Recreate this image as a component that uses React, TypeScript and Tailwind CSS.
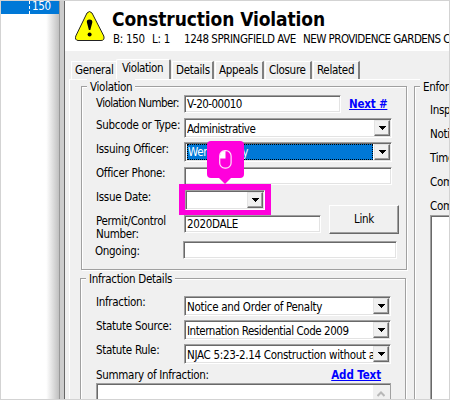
import type { ReactNode } from 'react';
import { clsx } from 'clsx';

const tabs = [
  { label: 'Details', className: 'ml-px w-[42px]' },
  { label: 'Appeals', className: 'ml-px w-[49px]' },
  { label: 'Closure', className: 'ml-px w-[47px]' },
  { label: 'Related', className: 'ml-px w-[47px]' },
];

const enforcement = ['Inspector:', 'Notice Date:', 'Time:', 'Comply By:', 'Comments:'];

function WarningIcon() {
  return (
    <svg width="30" height="32" viewBox="0 0 30 32" className="shrink-0">
      <path d="M12 3Q14.5 0 17 3L28.8 26Q30 30.5 26 30.5H3Q-.5 30 .8 26Z" fill="#ff0" stroke="#222" />
      <path d="M14.5 9.5c-2 0-3 1.3-2.6 3.1L13.9 20h1.4l2-7.4c.4-1.8-.8-3.1-2.8-3.1Z" fill="#000" />
      <circle cx="14.6" cy="24.5" r="2" fill="#000" />
    </svg>
  );
}

function GroupBox({ title, className, children }: { title: string; className: string; children: ReactNode }) {
  return (
    <div
      className={clsx(
        'relative border border-[#a0a0a0] shadow-[1px_1px_0_#fff,inset_1px_1px_0_#fff]',
        className
      )}
    >
      <span className="absolute -top-[8px] left-[5px] bg-[#f0f0f0] px-[3px] leading-4">{title}</span>
      {children}
    </div>
  );
}

function TextField({ value, className }: { value?: string; className: string }) {
  return (
    <div
      className={clsx(
        'h-[18px] shrink-0 border border-t-[#a0a0a0] border-l-[#a0a0a0] border-r-white border-b-white bg-white pl-[2px] leading-[17px] shadow-[inset_1px_1px_0_#696969,inset_-1px_-1px_0_#e3e3e3]',
        className
      )}
    >
      {value}
    </div>
  );
}

function Combo({ value, selected, className }: { value?: string; selected?: boolean; className: string }) {
  return (
    <div
      className={clsx(
        'flex h-5 shrink-0 border border-t-[#a0a0a0] border-l-[#a0a0a0] border-r-white border-b-white bg-white p-px shadow-[inset_1px_1px_0_#696969,inset_-1px_-1px_0_#e3e3e3]',
        className
      )}
    >
      <div
        className={clsx(
          'ml-px min-w-0 flex-1 overflow-hidden',
          selected ? 'mr-px border border-dotted border-black bg-[#0078d7] leading-[15px] text-white' : 'leading-[18px]'
        )}
      >
        {value}
      </div>
      <div className="flex w-4 shrink-0 items-center justify-center border border-t-[#e3e3e3] border-l-[#e3e3e3] border-r-[#696969] border-b-[#696969] bg-[#f0f0f0] shadow-[inset_-1px_-1px_0_#a0a0a0]">
        <svg width="7" height="4" viewBox="0 0 7 4" shapeRendering="crispEdges">
          <path d="M0 0h7L3.5 4Z" />
        </svg>
      </div>
    </div>
  );
}

function Row({ label, labelClass, children }: { label: string; labelClass?: string; children: ReactNode }) {
  return (
    <div className="flex h-6">
      <span className={clsx('w-[88px] shrink-0 leading-4', labelClass ?? '-mt-[2px]')}>{label}</span>
      {children}
    </div>
  );
}

function Callout() {
  return (
    <div className="absolute left-[28px] -top-[43px] flex h-[37px] w-[37px] items-center justify-center rounded-[4px] bg-[#ff00dc]">
      <svg width="13" height="19" viewBox="0 0 13 19" fill="none" stroke="#ffe6fb">
        <rect x=".7" y=".7" width="11.4" height="17.4" rx="5.2" strokeWidth="1.2" />
        <path d="M1 8V6Q1.3 1 6.5 1V8.5H1Z" fill="#fff" stroke="none" />
      </svg>
      <svg width="12" height="6" viewBox="0 0 12 6" className="absolute top-[37px] left-[12px]">
        <path d="M0 0h12L6 6Z" fill="#ff00dc" />
      </svg>
    </div>
  );
}

export default function App() {
  return (
    <div className="flex h-[400px] w-[450px] overflow-hidden border border-[#d3d3d3] bg-white font-['DejaVu_Sans_Condensed','DejaVu_Sans',sans-serif] text-[11.5px] tracking-[-0.3px] whitespace-nowrap text-black [font-stretch:condensed]">
      <div className="flex w-[58px] shrink-0 flex-col bg-linear-to-r from-white from-78% to-[#c0c0c0]">
        <div className="flex h-[13px] bg-[#0078d7] text-white">
          <div className="w-[29px] border-r border-dashed border-white" />
          <span className="pl-[2px] leading-[10px]">150</span>
        </div>
      </div>
      <div className="w-[6px] shrink-0 border-r border-l border-r-[#666] border-l-[#999] bg-[#ccc]" />

      <div className="flex min-w-0 flex-1 flex-col overflow-hidden bg-[#f0f0f0]">
        <header className="flex h-[50px] shrink-0 bg-white pt-[9px] pl-[10px]">
          <WarningIcon />
          <div className="ml-[7px]">
            <h1 className="-mt-px text-[19px] leading-5 font-bold tracking-[-0.1px]">Construction Violation</h1>
            <div className="mt-[2px] flex leading-[17px]">
              <span className="w-[40px] pl-px">B: 150</span>
              <span className="w-[32px]">L: 1</span>
              <span className="w-[119px] tracking-[-0.45px]">1248 SPRINGFIELD AVE</span>
              <span className="tracking-[-0.55px]">NEW PROVIDENCE GARDENS COURT</span>
            </div>
          </div>
        </header>

        <nav className="flex h-[28px] shrink-0 items-end pl-[6px] leading-4">
          <div className="h-[18px] w-[45px] border-t border-l border-white pl-[3px]">General</div>
          <div className="h-5 w-[55px] rounded-t-[2px] border-t border-r-2 border-l border-white border-r-[#808080] pl-[5px] leading-[17px] tracking-[-0.45px]">Violation</div>
          {tabs.map(tab => (
            <div
              key={tab.label}
              className={clsx('h-[18px] border-t border-r-2 border-l border-white border-r-[#808080] pl-[3px]', tab.className)}
            >
              {tab.label}
            </div>
          ))}
        </nav>

        <main className="ml-[4px] flex min-h-0 flex-1 border-t border-l border-white">
          <div className="ml-[10px] w-[328px] shrink-0 pt-[6px]">
            <GroupBox title="Violation" className="ml-px h-[184px] w-[326px] pt-[8px] pl-[14px]">
              <Row label="Violation Number:" labelClass="tracking-[-0.6px]">
                <TextField value="V-20-00010" className="w-[157px] tracking-[-0.5px]" />
                <a className="ml-[8px] leading-[18px] font-bold tracking-[-0.2px] text-[#00f] underline">Next #</a>
              </Row>
              <Row label="Subcode or Type:">
                <Combo value="Administrative" className="-mt-px w-[208px] tracking-[-0.5px]" />
              </Row>
              <Row label="Issuing Officer:">
                <Combo value="Wendy Gray" selected className="-mt-px w-[208px]" />
              </Row>
              <Row label="Officer Phone:">
                <TextField className="w-[208px]" />
              </Row>
              <Row label="Issue Date:">
                <div className="relative z-10 -mt-[7px] -ml-[5px] h-[31px] w-[92px] bg-[#ff00dc] p-[6px]">
                  <Combo className="w-[80px]" />
                  <Callout />
                </div>
              </Row>
              <div className="flex h-[26px]">
                <span className="w-[88px] shrink-0 leading-[13px]">Permit/Control<br />Number:</span>
                <TextField value="2020DALE" className="w-[137px]" />
                <button className="-mt-[10px] ml-[8px] h-[29px] w-[70px] shrink-0 border border-t-white border-l-white border-r-[#696969] border-b-[#696969] shadow-[inset_-1px_-1px_0_#a0a0a0]">Link</button>
              </div>
              <div className="-ml-px">
                <Row label="Ongoing:" labelClass="mt-[2px]">
                  <TextField className="w-[214px]" />
                </Row>
              </div>
            </GroupBox>

            <GroupBox title="Infraction Details" className="mt-[8px] h-[140px] w-[326px] pt-[17px] pl-[15px]">
              <Row label="Infraction:">
                <Combo value="Notice and Order of Penalty" className="w-[207px]" />
              </Row>
              <Row label="Statute Source:">
                <Combo value="Internation Residential Code 2009" className="w-[207px] tracking-[-0.45px]" />
              </Row>
              <Row label="Statute Rule:">
                <Combo value="NJAC 5:23-2.14 Construction without a" className="w-[207px]" />
              </Row>
              <div className="flex h-[15px] w-[285px] justify-between leading-[14px]">
                <span>Summary of Infraction:</span>
                <a className="font-bold tracking-[-0.1px] text-[#00f] underline">Add Text</a>
              </div>
              <div className="flex h-[40px] w-[295px] justify-end border border-[#a0a0a0] bg-white shadow-[inset_1px_1px_0_#696969]">
                <div className="mt-px w-[17px] bg-[#f0f0f0] pt-[6px] pl-[4px]">
                  <svg width="8" height="6" viewBox="0 0 8 6" fill="none" stroke="#b8b8b8" strokeWidth="2">
                    <path d="M.5 5 4 1.5 7.5 5" />
                  </svg>
                </div>
              </div>
            </GroupBox>
          </div>

          <div className="ml-[6px] pt-[6px]">
            <GroupBox title="Enforcement" className="h-[400px] w-[200px] pt-[15px] pl-[15px]">
              {enforcement.map(label => (
                <div key={label} className="h-6 leading-4">{label}</div>
              ))}
              <div className="-mt-[7px] h-[250px] w-[150px] border border-[#a0a0a0] bg-white shadow-[inset_1px_1px_0_#696969]" />
            </GroupBox>
          </div>
        </main>
      </div>
    </div>
  );
}
